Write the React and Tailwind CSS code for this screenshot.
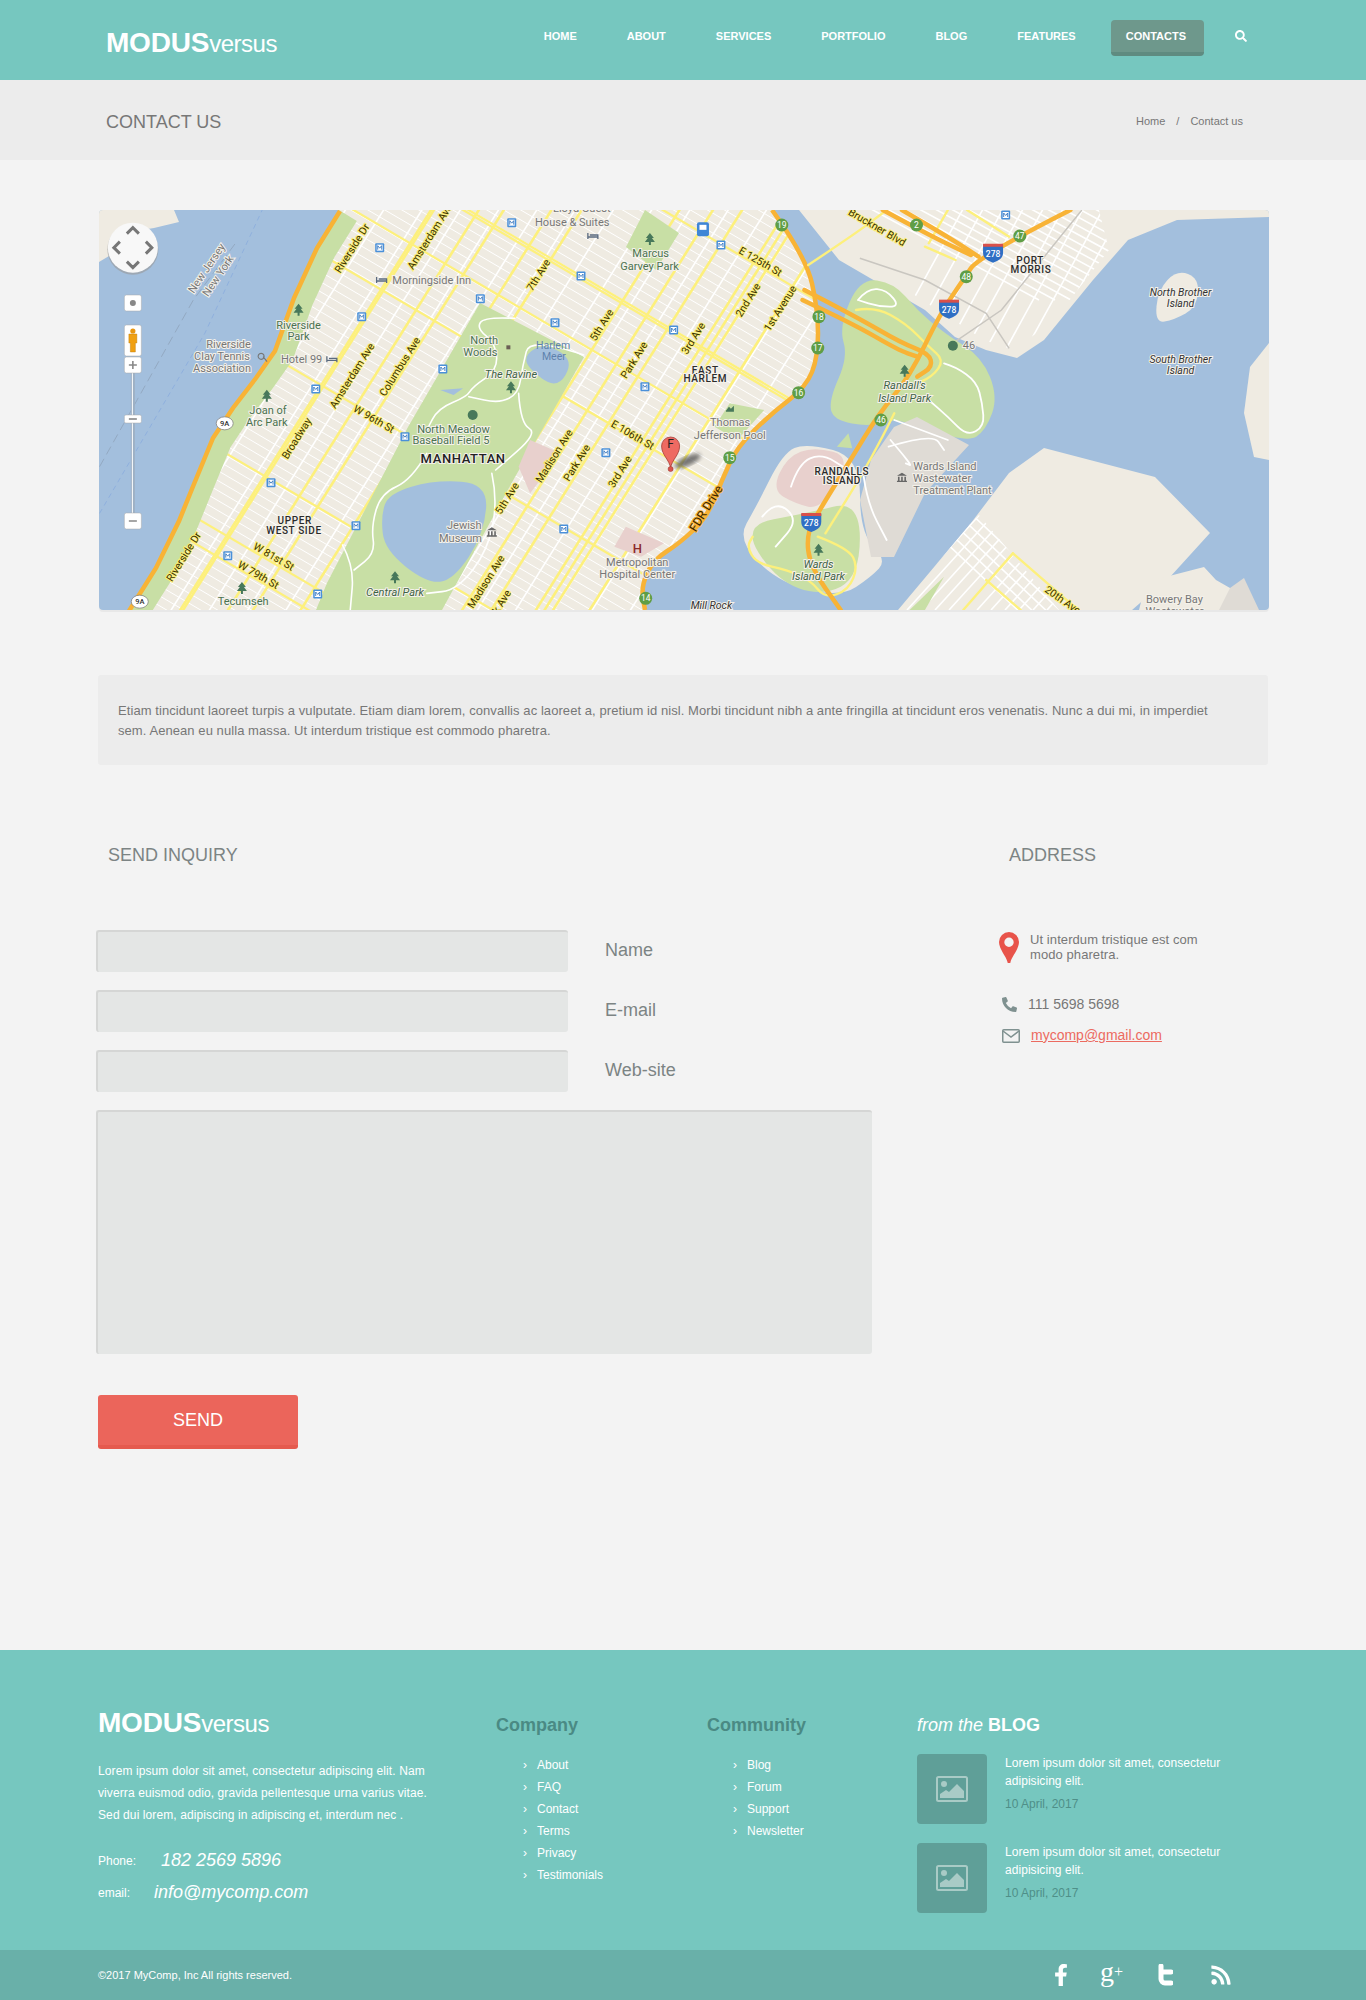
import { FaSearch, FaFacebookF, FaRss, FaPhoneAlt } from 'react-icons/fa';

const NAV = ['Home', 'About', 'Services', 'Portfolio', 'Blog', 'Features'];
const COMPANY = ['About', 'FAQ', 'Contact', 'Terms', 'Privacy', 'Testimonials'];
const COMMUNITY = ['Blog', 'Forum', 'Support', 'Newsletter'];

// map tracing helpers: west and east half of the map, in traced coordinates
const w = (x, y) => [x / 2.613 - 9, y / 3 - 10];
const e = (x, y) => [x / 2.613 + 581, y / 3 - 10];
const pts = (list) => list.map((p) => p.join(',')).join(' ');

// rounds a traced outline through the midpoints of its segments
const smooth = (list, closed = false) => {
  const mid = (a, b) => [(a[0] + b[0]) / 2, (a[1] + b[1]) / 2];
  if (closed) {
    let d = `M${mid(list[list.length - 1], list[0]).join(' ')}`;
    list.forEach((p, i) => {
      d += `Q${p.join(' ')} ${mid(p, list[(i + 1) % list.length]).join(' ')}`;
    });
    return `${d}Z`;
  }
  let d = `M${list[0].join(' ')}`;
  list.slice(1, -1).forEach((p, i) => {
    d += `Q${p.join(' ')} ${mid(p, list[i + 2]).join(' ')}`;
  });
  return `${d}L${list[list.length - 1].join(' ')}`;
};

const WATER = '#a3bfdd';
const LAND = '#efebe2';
const GREEN = '#c8dfa5';
const ORANGE = '#f8b336';
const YELLOW = '#fdf07c';

const HUDSON = [[240, 0], [217, 37], [194, 87], [175, 140], [156, 167], [133, 197], [113, 227], [94, 273], [79, 310], [56, 357], [29, 400]];
const EAST_SHORE = [[673, 0], [707, 47], [719, 100], [719, 147], [707, 177], [673, 203], [638, 237], [623, 270], [608, 307], [581, 333], [554, 350], [542, 377], [546, 400]];
const BRONX = [[700, 0], [740, 50], [826, 100], [856, 127], [887, 140], [918, 148], [945, 130], [967, 103], [994, 70], [1029, 30], [1078, 10], [1170, 7], [1170, 0]];
const QUEENS = [[945, 238], [1056, 267], [1111, 323], [1071, 367], [1033, 400], [799, 400], [872, 313], [910, 263]];
const PARK = [[381, 93], [309, 217], [228, 373], [217, 400], [343, 400], [416, 267], [485, 147]];
const RANDALL = [[761, 68], [795, 73], [818, 100], [845, 123], [883, 147], [899, 187], [887, 220], [868, 233], [795, 207], [772, 217], [734, 210], [730, 190], [749, 147], [740, 117]];
const PLANT = [[818, 207], [870, 235], [826, 283], [795, 347], [772, 347], [761, 290], [772, 250], [795, 217]];
const WARDS = [[707, 233], [761, 247], [761, 323], [788, 350], [772, 367], [742, 387], [680, 373], [638, 330], [657, 297], [684, 243]];

const AVE_DIR = [0.531, -0.847];
const ST_DIR = [0.862, 0.506];
const lineThrough = ([x, y], [dx, dy], len = 620) => [x - dx * len, y - dy * len, x + dx * len, y + dy * len];

const MAJOR_AVES = [w(700, 380), w(620, 540), w(650, 700), w(770, 600), w(900, 590), w(1110, 350), w(1300, 470), w(1240, 740), w(1300, 770), w(1400, 800), w(1510, 640), e(160, 330), e(250, 340)];
const MAJOR_STS = [w(700, 620), w(1430, 720), e(200, 195), w(480, 1090), w(430, 1135), w(1000, 240), w(1420, 330), w(400, 790), e(160, 510)];

const LABEL_STYLE = {
  grey: { fill: '#777', size: 11 },
  park: { fill: '#4b7350', size: 11 },
  parkI: { fill: '#3f6345', size: 11, italic: true },
  water: { fill: '#5f82ad', size: 10.5, halo: 'none' },
  road: { fill: '#3a3200', size: 10.5, halo: '#fdf07c' },
  fdr: { fill: '#3a2600', size: 12, halo: '#f8b336' },
  caps: { fill: '#2b2b2b', size: 10, weight: 500, spacing: 0.6 },
  city: { fill: '#222', size: 13, weight: 500, spacing: 0.6 },
  isle: { fill: '#333', size: 10.5, italic: true },
};

const LABELS = [
  [w(305, 205), 'New Jersey', 'grey', -56], [w(335, 228), 'New York', 'grey', -56],
  [w(685, 145), 'Riverside Dr', 'road', -58], [w(888, 110), 'Amsterdam Ave', 'road', -58],
  [w(893, 240), 'Morningside Inn', 'grey'], [w(1260, 66), 'House & Suites', 'grey'], [w(1285, 26), 'Lloyd Guest', 'grey'],
  [w(1172, 225), '7th Ave', 'road', -58], [w(1465, 160), 'Marcus', 'park'], [w(1462, 198), 'Garvey Park', 'park'],
  [w(545, 375), 'Riverside', 'park'], [w(545, 410), 'Park', 'park'],
  [w(362, 432), 'Riverside', 'grey'], [w(345, 468), 'Clay Tennis', 'grey'], [w(345, 504), 'Association', 'grey'],
  [w(553, 477), 'Hotel 99', 'grey'], [w(685, 527), 'Amsterdam Ave', 'road', -58], [w(810, 500), 'Columbus Ave', 'road', -58],
  [w(1030, 420), 'North', 'park'], [w(1020, 458), 'Woods', 'park'], [w(1210, 435), 'Harlem', 'water'], [w(1212, 468), 'Meer', 'water'],
  [w(1100, 522), 'The Ravine', 'parkI'], [w(1337, 375), '5th Ave', 'road', -58], [w(1422, 480), 'Park Ave', 'road', -58],
  [w(465, 632), 'Joan of', 'park'], [w(462, 668), 'Arc Park', 'park'],
  [w(540, 715), 'Broadway', 'road', -58], [w(742, 657), 'W 96th St', 'road', 30],
  [w(950, 687), 'North Meadow', 'park'], [w(943, 722), 'Baseball Field 5', 'park'], [w(975, 775), 'MANHATTAN', 'city'],
  [w(1418, 705), 'E 106th St', 'road', 30], [w(1213, 768), 'Madison Ave', 'road', -58], [w(1272, 788), 'Park Ave', 'road', -58],
  [w(1385, 815), '3rd Ave', 'road', -58], [w(1090, 895), '5th Ave', 'road', -58], [w(535, 960), 'UPPER', 'caps'], [w(533, 990), 'WEST SIDE', 'caps'],
  [w(978, 977), 'Jewish', 'grey'], [w(968, 1014), 'Museum', 'grey'], [w(480, 1070), 'W 81st St', 'road', 30], [w(440, 1125), 'W 79th St', 'road', 30],
  [w(245, 1070), 'Riverside Dr', 'road', -58], [w(797, 1176), 'Central Park', 'parkI'], [w(400, 1205), 'Tecumseh', 'park'],
  [w(1035, 1145), 'Madison Ave', 'road', -58], [w(1065, 1225), 'Park Ave', 'road', -58],
  [w(1430, 1086), 'Metropolitan', 'grey'], [w(1430, 1122), 'Hospital Center', 'grey'],
  [e(515, 82), 'Bruckner Blvd', 'road', 30], [e(210, 185), 'E 125th St', 'road', 30], [e(178, 300), '2nd Ave', 'road', -58],
  [e(262, 325), '1st Avenue', 'road', -58], [e(35, 415), '3rd Ave', 'road', -58], [e(915, 180), 'PORT', 'caps'], [e(917, 207), 'MORRIS', 'caps'],
  [e(1308, 276), 'North Brother', 'isle'], [e(1308, 309), 'Island', 'isle'], [e(1308, 477), 'South Brother', 'isle'], [e(1308, 510), 'Island', 'isle'],
  [e(755, 437), '46', 'grey'], [e(66, 510), 'EAST', 'caps'], [e(66, 534), 'HARLEM', 'caps'], [e(131, 668), 'Thomas', 'grey'], [e(130, 705), 'Jefferson Pool', 'grey'],
  [e(587, 555), "Randall's", 'parkI'], [e(587, 594), 'Island Park', 'parkI'], [e(423, 813), 'RANDALLS', 'caps'], [e(423, 840), 'ISLAND', 'caps'],
  [e(692, 798), 'Wards Island', 'grey'], [e(685, 834), 'Wastewater', 'grey'], [e(712, 870), 'Treatment Plant', 'grey'],
  [e(68, 925), 'FDR Drive', 'fdr', -58], [e(362, 1092), 'Wards', 'parkI'], [e(362, 1130), 'Island Park', 'parkI'], [e(82, 1217), 'Mill Rock', 'isle'],
  [e(1000, 1200), '20th Ave', 'road', 35], [e(1292, 1197), 'Bowery Bay', 'grey'], [e(1292, 1234), 'Wastewater', 'grey'],
];

const METRO = [w(1102, 68), w(757, 143), w(1283, 228), w(1020, 296), w(710, 350), w(1215, 368), w(1525, 390), w(922, 507), w(1450, 560), w(590, 567), w(823, 710), w(1348, 758), w(473, 848), w(695, 977), w(1238, 987), w(360, 1067), w(595, 1182), e(107, 135), e(851, 45)];
const TREES = [w(545, 332), w(462, 590), w(1100, 565), w(1463, 120), w(797, 1135), w(397, 1167), e(587, 515), e(362, 1052)];
const EXITS = [[e(266, 75), '19'], [e(618, 75), '2'], [e(888, 108), '47'], [e(748, 230), '48'], [e(363, 350), '18'], [e(360, 444), '17'], [e(310, 578), '16'], [e(525, 660), '46'], [e(130, 773), '15'], [w(1452, 1195), '14']];
const SHIELDS = [e(818, 158), e(703, 326), e(343, 966)];
const ROUTE_9A = [w(352, 670), w(130, 1205)];
const HOTELS = [w(762, 240), w(632, 478), w(1314, 108)];
const MUSEUMS = [w(1050, 997), e(580, 833)];

const PARK_PATHS = [
  [w(1110, 355), w(1030, 350), w(1010, 385), w(1060, 430), w(1065, 510), w(1000, 560), w(985, 590), w(910, 625), w(880, 690)],
  [w(1290, 465), w(1150, 410), w(1130, 500), w(1120, 580), w(1070, 610), w(990, 590)],
  [w(1120, 580), w(1125, 670), w(1170, 700), w(1060, 810)],
  [w(880, 760), w(840, 840), w(760, 880), w(735, 980), w(745, 1060), w(690, 1110)],
  [w(660, 1035), w(690, 1100), w(680, 1230)],
  [w(1050, 820), w(1065, 900), w(1040, 1050), w(960, 1170), w(880, 1180)],
];
const RANDALL_PATHS = [
  [e(690, 490), e(720, 500), e(775, 545), e(790, 610), e(795, 680), e(750, 708), e(700, 650), e(650, 600)],
  [e(465, 300), e(490, 265), e(540, 270), e(575, 320), e(520, 320), e(465, 300)],
  [e(560, 660), e(700, 720)],
  [e(545, 740), e(660, 700), e(690, 750)],
  [e(550, 720), e(610, 800), e(590, 790)],
  [e(480, 830), e(490, 910), e(540, 1020)],
  [e(290, 860), e(310, 790), e(370, 760), e(440, 810)],
  [e(215, 950), e(250, 900), e(310, 960), e(250, 1040)],
];
const ORANGE_RAMPS = [
  [e(325, 270), e(460, 350), e(580, 430), e(650, 460), e(660, 500), e(620, 530)],
  [e(320, 300), e(450, 370), e(570, 450), e(620, 470)],
  [e(530, 30), e(650, 105), e(760, 165)],
  [e(580, 30), e(700, 110), e(780, 170)],
  [e(1020, 30), e(780, 170), e(740, 240), e(680, 340), e(600, 530), e(520, 640), e(440, 790), e(370, 920), e(330, 1000), e(340, 1100), e(420, 1230)],
];
const YELLOW_RAMPS = [
  [e(460, 330), e(510, 320), e(590, 370), e(650, 440), e(690, 480), e(660, 530), e(600, 560)],
  [e(335, 195), e(460, 100), e(540, 30)],
  [e(640, 140), e(720, 180)],
  [e(700, 30), e(650, 130)],
  [e(750, 30), e(860, 110)],
  [e(360, 1010), e(440, 1045), e(465, 1100), e(440, 1170), e(380, 1195), e(340, 1140), e(280, 1110), e(200, 1090), e(175, 1040), e(190, 1010)],
  [e(560, 640), e(500, 780), e(380, 1000)],
  [e(740, 1230), e(870, 1060)],
  [e(870, 1060), e(1040, 1230)],
  [e(800, 1140), e(890, 1230)],
];

function MapLabel({ p, text, kind, rotate = 0 }) {
  const s = LABEL_STYLE[kind];
  return (
    <text
      x={p[0]}
      y={p[1]}
      transform={rotate ? `rotate(${rotate} ${p[0]} ${p[1]})` : undefined}
      textAnchor="middle"
      dominantBaseline="central"
      fontFamily="Roboto, sans-serif"
      fontSize={s.size}
      fontWeight={s.weight || 400}
      fontStyle={s.italic ? 'italic' : 'normal'}
      letterSpacing={s.spacing || 0}
      fill={s.fill}
      stroke={s.halo === 'none' ? 'none' : s.halo || '#f4f1ea'}
      strokeWidth="2"
      paintOrder="stroke"
    >
      {text}
    </text>
  );
}

function Lines({ list, stroke, width }) {
  return list.map((l, i) => (
    <path key={i} d={smooth(l)} fill="none" stroke={stroke} strokeWidth={width} strokeLinejoin="round" strokeLinecap="round" />
  ));
}

function MapControls() {
  const [cx, cy] = w(112, 143);
  const btn = 'white';
  return (
    <g>
      <circle cx={cx} cy={cy + 1.5} r="25.5" fill="#9a9a9a" opacity="0.6" />
      <circle cx={cx} cy={cy} r="25" fill="#f8f8f8" />
      <path d={`M${cx - 6} ${cy - 14}l6 -6 6 6M${cx - 6} ${cy + 14}l6 6 6 -6M${cx - 13} ${cy - 6}l-6 6 6 6M${cx + 13} ${cy - 6}l6 6 -6 6`} fill="none" stroke="#777" strokeWidth="3" />
      <rect x={cx - 8.5} y="85" width="17" height="16" rx="2" fill={btn} stroke="#aaa" strokeWidth="0.5" />
      <circle cx={cx} cy="93" r="3" fill="#888" />
      <rect x={cx - 2} y="163" width="4" height="145" fill="#9db0c4" />
      <rect x={cx - 1} y="163" width="1" height="145" fill="#fff" />
      <rect x={cx - 8.5} y="115" width="17" height="31" rx="2" fill={btn} stroke="#aaa" strokeWidth="0.5" />
      <circle cx={cx} cy="121" r="2.6" fill="#e8960f" />
      <path d={`M${cx - 4} 124h8v9h-1.5v9h-5v-9H${cx - 4}z`} fill="#f0a012" stroke="#b87708" strokeWidth="0.4" />
      <rect x={cx - 8.5} y="147" width="17" height="16" rx="2" fill={btn} stroke="#aaa" strokeWidth="0.5" />
      <path d={`M${cx - 4} 155h8M${cx} 151v8`} stroke="#888" strokeWidth="1.6" />
      <rect x={cx - 8.5} y="205" width="17" height="8" rx="1.5" fill={btn} stroke="#aaa" strokeWidth="0.5" />
      <path d={`M${cx - 4} 209h8`} stroke="#888" strokeWidth="1.6" />
      <rect x={cx - 8.5} y="303" width="17" height="16" rx="2" fill={btn} stroke="#aaa" strokeWidth="0.5" />
      <path d={`M${cx - 4} 311h8`} stroke="#888" strokeWidth="1.6" />
    </g>
  );
}

function MapPicture() {
  const [px, py] = [571.6, 234];
  return (
    <svg viewBox="0 0 1170 400" className="block h-[400px] w-[1170px]">
      <defs>
        <clipPath id="bronx-grid"><polygon points={pts([[770, 0], [1000, 0], [1010, 40], [955, 110], [915, 140], [885, 130], [800, 75]])} /></clipPath>
        <clipPath id="queens-grid"><polygon points={pts([[799, 400], [872, 313], [880, 305], [960, 400]])} /></clipPath>
        <filter id="pin-shadow"><feGaussianBlur stdDeviation="2" /></filter>
      </defs>
      <rect width="1170" height="400" fill={LAND} />

      {/* manhattan grid */}
      {Array.from({ length: 102 }, (_, i) => {
        const [a, b, c, d] = lineThrough([170 + AVE_DIR[0] * i * 8.6, 480 + AVE_DIR[1] * i * 8.6], ST_DIR, 800);
        return <line key={i} x1={a} y1={b} x2={c} y2={d} stroke="#fff" strokeWidth="1" />;
      })}
      {Array.from({ length: 24 }, (_, i) => {
        const [a, b, c, d] = lineThrough([20 + i * 28, 300 + i * 16.4], AVE_DIR, 700);
        return <line key={i} x1={a} y1={b} x2={c} y2={d} stroke="#fff" strokeWidth="1.6" />;
      })}
      {MAJOR_STS.map((p, i) => {
        const [a, b, c, d] = lineThrough(p, ST_DIR, 400);
        return <line key={i} x1={a} y1={b} x2={c} y2={d} stroke={YELLOW} strokeWidth="2.2" />;
      })}
      {MAJOR_AVES.map((p, i) => {
        const [a, b, c, d] = lineThrough(p, AVE_DIR);
        return <line key={i} x1={a} y1={b} x2={c} y2={d} stroke={YELLOW} strokeWidth="2.6" />;
      })}

      {/* parks, blocks */}
      <polygon points={pts(PARK)} fill={GREEN} />
      <polygon points={pts([[527, 37], [546, 0], [580, 23], [557, 60]])} fill={GREEN} />
      <polygon points={pts([w(1150, 720), w(1230, 760), w(1150, 880), w(1120, 800)])} fill="#e8d0cd" />
      <polygon points={pts([w(1400, 980), w(1500, 1030), w(1440, 1070), w(1370, 1040)])} fill="#e8d0cd" />
      <polyline points={pts(HUDSON)} fill="none" stroke={GREEN} strokeWidth="42" />
      <polygon points={pts([e(130, 610), e(220, 630), e(150, 720), e(90, 680)])} fill={GREEN} />

      {/* water */}
      <polygon points={pts([[0, 0], ...HUDSON, [0, 400]])} fill={WATER} />
      <path d={`${smooth(EAST_SHORE)}L1170 400L1170 0Z`} fill={WATER} />
      <path d={smooth([w(780, 880), w(900, 840), w(1040, 850), w(1030, 1000), w(950, 1140), w(880, 1150), w(770, 1050), w(760, 950)], true)} fill={WATER} />
      <path d={smooth([w(1140, 460), w(1190, 430), w(1265, 480), w(1220, 570), w(1140, 500)], true)} fill={WATER} />
      <polygon points={pts([w(915, 570), w(975, 565), w(950, 585)])} fill={WATER} />
      <path d={`M${pts([w(25, 800), w(270, 300), w(380, 130)])}`} fill="none" stroke="#93a9c2" strokeWidth="1" strokeDasharray="9 5" />
      <path d={`M${pts([w(25, 940), w(300, 400), w(450, 30)])}`} fill="none" stroke="#8fb0dd" strokeWidth="1" strokeDasharray="5 4" />

      {/* land around */}
      <polygon points={pts([[0, 0], [75, 0], [80, 12], [55, 18], [30, 22], [20, 40], [0, 52]])} fill={LAND} />
      <polygon points={pts(BRONX)} fill={LAND} />
      <g clipPath="url(#bronx-grid)">
        {Array.from({ length: 24 }, (_, i) => <line key={i} x1={700 + i * 16} y1={-40} x2={940 + i * 16} y2={90} stroke="#fff" strokeWidth="1.6" />)}
        {Array.from({ length: 22 }, (_, i) => <line key={i} x1={770 + i * 20} y1={170} x2={880 + i * 20} y2={-30} stroke="#fff" strokeWidth="1.6" />)}
      </g>
      <polyline points={pts([e(470, 175), e(640, 240), e(800, 340), e(860, 445)])} fill="none" stroke="#c9c6c0" strokeWidth="1.5" />
      <polyline points={pts([e(700, 440), e(840, 330), e(1050, 30)])} fill="none" stroke="#c9c6c0" strokeWidth="1.5" />
      <polygon points={pts(QUEENS)} fill={LAND} />
      <polygon points={pts([[1040, 400], [1047, 372], [1105, 357], [1117, 370], [1131, 378], [1155, 400]])} fill={LAND} />
      <polygon points={pts([[1131, 378], [1145, 368], [1160, 400], [1120, 400]])} fill="#dfdbd5" />
      <polygon points={pts([[1170, 133], [1151, 157], [1145, 203], [1155, 247], [1170, 250]])} fill={LAND} />
      <path d={smooth([[1056, 113], [1059, 80], [1078, 60], [1100, 68], [1098, 97], [1075, 110]], true)} fill={LAND} />
      <g clipPath="url(#queens-grid)">
        {Array.from({ length: 16 }, (_, i) => <line key={i} x1={780 + i * 14} y1={400} x2={880 + i * 14} y2={290} stroke="#fff" strokeWidth="1.6" />)}
        {Array.from({ length: 14 }, (_, i) => <line key={i} x1={780 + i * 14} y1={270} x2={940 + i * 14} y2={420} stroke="#fff" strokeWidth="1.6" />)}
      </g>
      <polygon points={pts([e(600, 1230), e(690, 1130), e(640, 1230)])} fill={GREEN} />

      {/* islands */}
      <path d={smooth(WARDS, true)} fill={LAND} />
      <path d={smooth([e(160, 975), e(330, 940), e(470, 900), e(470, 1130), e(370, 1190), e(250, 1140)], true)} fill={GREEN} />
      <path d={smooth([e(240, 870), e(280, 770), e(350, 740), e(450, 770), e(370, 930), e(300, 910)], true)} fill="#e8d0cd" />
      <path d={smooth(RANDALL, true)} fill={GREEN} />
      <polygon points={pts([e(410, 740), e(440, 700), e(450, 745)])} fill={GREEN} />
      <polygon points={pts(PLANT)} fill="#dfdbd5" />
      <Lines list={RANDALL_PATHS} stroke="#fff" width="1.8" />
      <Lines list={PARK_PATHS} stroke="#fff" width="1.6" />

      {/* highways */}
      <polyline points={pts(HUDSON.map(([x, y]) => [x + 1, y + 1]))} fill="none" stroke={ORANGE} strokeWidth="4.5" />
      <path d={smooth(EAST_SHORE)} fill="none" stroke={ORANGE} strokeWidth="4.5" />
      <Lines list={YELLOW_RAMPS} stroke={YELLOW} width="2.4" />
      <Lines list={ORANGE_RAMPS} stroke={ORANGE} width="4.5" />

      {/* markers */}
      {METRO.map(([x, y], i) => (
        <g key={i}>
          <rect x={x - 4.5} y={y - 4.5} width="9" height="9" rx="1" fill="#4a90d9" />
          <rect x={x - 3} y={y - 3} width="6" height="6" fill="#fff" />
          <path d={`M${x - 2} ${y + 2}v-4l2 2.5 2-2.5v4`} fill="none" stroke="#3a78bf" strokeWidth="0.9" />
        </g>
      ))}
      <rect x={e(60, 0)[0] - 6} y={e(0, 88)[1] - 7} width="12" height="14" rx="2" fill="#3f86d6" />
      <rect x={e(60, 0)[0] - 3.5} y={e(0, 88)[1] - 4.5} width="7" height="5" fill="#fff" />
      {TREES.map(([x, y], i) => <path key={i} d={`M${x} ${y - 7}l4 5h-2l3 4h-4v3h-2v-3h-4l3-4h-2z`} fill="#47785a" />)}
      {EXITS.map(([[x, y], n]) => (
        <g key={n + x}>
          <circle cx={x} cy={y} r="6.5" fill="#5f9e46" />
          <text x={x} y={y} textAnchor="middle" dominantBaseline="central" fontFamily="Roboto, sans-serif" fontSize="8.5" fill="#fff">{n}</text>
        </g>
      ))}
      {SHIELDS.map(([x, y], i) => (
        <g key={i}>
          <path d={`M${x - 10} ${y - 8}h20v8c0 6-5 8-10 10-5-2-10-4-10-10z`} fill="#2f6fc4" />
          <path d={`M${x - 10} ${y - 9}h20v3h-20z`} fill="#d9504a" />
          <text x={x} y={y + 1} textAnchor="middle" dominantBaseline="central" fontFamily="Roboto, sans-serif" fontSize="8.5" fontWeight="500" fill="#fff">278</text>
        </g>
      ))}
      {ROUTE_9A.map(([x, y], i) => (
        <g key={i}>
          <ellipse cx={x} cy={y} rx="8.5" ry="6.5" fill="#fff" stroke="#777" strokeWidth="0.7" />
          <text x={x} y={y} textAnchor="middle" dominantBaseline="central" fontFamily="Roboto, sans-serif" fontSize="7.5" fontWeight="500" fill="#333">9A</text>
        </g>
      ))}
      <text x={w(1430, 0)[0]} y={w(0, 1045)[1]} textAnchor="middle" dominantBaseline="central" fontFamily="Roboto, sans-serif" fontSize="13" fontWeight="500" fill="#8c2a2a">H</text>
      {HOTELS.map(([x, y], i) => <path key={i} d={`M${x - 5} ${y - 3}v6M${x - 5} ${y + 1}h10v2M${x - 3} ${y - 1}h8v2`} fill="none" stroke="#5b6b80" strokeWidth="1.3" />)}
      {MUSEUMS.map(([x, y], i) => <path key={i} d={`M${x} ${y - 5}l5 3h-10zM${x - 4} ${y - 1}h1.6v4h-1.6zM${x - 0.8} ${y - 1}h1.6v4h-1.6zM${x + 2.4} ${y - 1}h1.6v4h-1.6zM${x - 5} ${y + 3}h10v1.4h-10z`} fill="#666" />)}
      <path d={`M${w(447, 0)[0]} ${w(0, 460)[1]}a3 3 0 1 0 .1 0zM${w(447, 0)[0] + 2} ${w(0, 470)[1]}l4 5`} fill="none" stroke="#777" strokeWidth="1.1" />
      <rect x={w(1088, 0)[0]} y={w(0, 436)[1]} width="4" height="4" fill="#6b5f55" />
      <circle cx={w(1000, 0)[0]} cy={w(0, 645)[1]} r="5" fill="#47785a" />
      <circle cx={e(713, 0)[0]} cy={e(0, 437)[1]} r="5" fill="#47785a" />
      <path d={`M${e(120, 0)[0]} ${e(0, 632)[1]}l3-4 2 2 3-3v6h-8z`} fill="#47785a" />

      {LABELS.map(([p, text, kind, rotate]) => <MapLabel key={text + p[0]} p={p} text={text} kind={kind} rotate={rotate} />)}

      {/* marker pin */}
      <ellipse cx={px + 17} cy={py + 17} rx="14" ry="4.5" fill="#555" opacity="0.8" filter="url(#pin-shadow)" transform={`rotate(-25 ${px + 17} ${py + 17})`} />
      <path d={`M${px} ${py + 24}c-1-8-9-13-9-22a9 9 0 0 1 18 0c0 9-8 14-9 22z`} fill="#ee6a62" stroke="#a33c36" strokeWidth="0.8" />
      <circle cx={px} cy={py + 25} r="2.5" fill="#d9534c" stroke="#a33c36" strokeWidth="0.6" />
      <text x={px} y={py} textAnchor="middle" dominantBaseline="central" fontFamily="Roboto, sans-serif" fontSize="12" fill="#222">F</text>

      <MapControls />
    </svg>
  );
}

function Logo() {
  return (
    <div className="text-white leading-none">
      <span className="text-[28px] font-bold tracking-[-0.2px]">MODUS</span>
      <span className="text-[24px] tracking-[-0.5px]">versus</span>
    </div>
  );
}

function FormRow({ label }) {
  return (
    <div className="flex items-center">
      <input className="h-[42px] w-[472px] rounded-[3px] border-t-2 border-l-2 border-[#d5d6d5] bg-[#e4e6e5]" />
      <label className="ml-[37px] pb-[2px] text-[18px] text-[#7c8484]">{label}</label>
    </div>
  );
}

function LinkList({ items, indent }) {
  return (
    <ul className={`mt-[15px] text-[12px] leading-[22px] text-white ${indent}`}>
      {items.map((item) => (
        <li key={item} className="flex">
          <span className="w-[14px]">›</span>
          {item}
        </li>
      ))}
    </ul>
  );
}

function BlogItem() {
  return (
    <div className="flex gap-[18px]">
      <div className="flex h-[70px] w-[70px] shrink-0 items-center justify-center rounded-[4px] bg-[#5f9f98]">
        <svg viewBox="0 0 32 26" className="h-[26px] w-8">
          <rect x="1" y="1" width="30" height="24" rx="1.5" fill="none" stroke="#a9cbc6" strokeWidth="2" />
          <circle cx="8" cy="8" r="3" fill="#a9cbc6" />
          <path d="M4 22v-4l6-4 3 2 8-8 7 7v7z" fill="#a9cbc6" />
        </svg>
      </div>
      <div className="w-[230px]">
        <p className="text-[12px] leading-[18px] tracking-[0.05px] text-white">Lorem ipsum dolor sit amet, consectetur adipisicing elit.</p>
        <p className="mt-[5px] text-[12px] leading-[18px] text-[#4f8f88]">10 April, 2017</p>
      </div>
    </div>
  );
}

export default function App() {
  return (
    <div className="bg-[#f3f3f3] font-['Liberation_Sans',Arial,sans-serif]">
      <header className="h-20 bg-[#76c7bf]">
        <div className="mx-auto flex w-[1170px] items-start">
          <div className="pt-[29px] pl-2"><Logo /></div>
          <nav className="ml-auto flex items-start gap-5 pt-5 pr-[21px] text-[11px] font-bold text-white uppercase">
            {NAV.map((item) => (
              <a key={item} className="flex h-9 items-center border-b-4 border-transparent px-[15px]">{item}</a>
            ))}
            <a className="flex h-9 items-center rounded-[4px] border-b-4 border-[#5f8b80] bg-[#6e988c] pr-[18px] pl-[15px]">Contacts</a>
            <FaSearch className="mt-[10px] ml-[11px] text-[12px]" />
          </nav>
        </div>
      </header>

      <div className="h-20 bg-[#ececec]">
        <div className="mx-auto flex h-full w-[1170px] items-center justify-between pt-1 pr-[25px] pl-2 text-[#777]">
          <h1 className="text-[18px]">CONTACT US</h1>
          <div className="mb-[2px] flex gap-[11px] text-[11px]">
            <span>Home</span><span>/</span><span>Contact us</span>
          </div>
        </div>
      </div>

      <main className="mx-auto w-[1170px] pt-[50px] pb-[201px]">
        <div className="ml-px w-[1170px] overflow-hidden rounded-[4px] shadow-[0_2px_0_#e8e8e8]">
          <MapPicture />
        </div>

        <div className="mt-[65px] h-[90px] rounded-[3px] bg-[#ececec] pt-[26px] pr-[50px] pl-5 text-[13px] leading-5 tracking-[0.07px] text-[#777]">
          Etiam tincidunt laoreet turpis a vulputate. Etiam diam lorem, convallis ac laoreet a, pretium id nisl. Morbi tincidunt nibh a ante fringilla at tincidunt eros venenatis. Nunc a dui mi, in imperdiet sem. Aenean eu nulla massa. Ut interdum tristique est commodo pharetra.
        </div>

        <div className="mt-[78px] flex">
          <section className="w-[901px]">
            <h2 className="pl-[10px] text-[18px] leading-6 text-[#7c8484]">SEND INQUIRY</h2>
            <form className="mt-[63px] -ml-[2px] flex flex-col gap-[18px]">
              <FormRow label="Name" />
              <FormRow label="E-mail" />
              <FormRow label="Web-site" />
              <textarea className="h-[244px] w-[776px] resize-none rounded-[3px] border-t-2 border-l-2 border-[#d5d6d5] bg-[#e4e6e5]" />
            </form>
            <button className="mt-[41px] h-[54px] w-[200px] rounded-[3px] border-b-4 border-[#e55a4e] bg-[#eb655b] text-[18px] text-white">SEND</button>
          </section>

          <section className="flex-1 text-[#777]">
            <h2 className="pl-[10px] text-[18px] leading-6 text-[#7c8484]">ADDRESS</h2>
            <div className="mt-[65px] flex">
              <svg viewBox="0 0 20 31" className="h-[31px] w-5 shrink-0">
                <path fillRule="evenodd" d="M10 0a10 10 0 0 1 10 10c0 7-7 14-8.5 20a1.5 1.5 0 0 1-3 0C7 24 0 17 0 10A10 10 0 0 1 10 0zm0 5.5a4.7 4.7 0 1 0 0 9.4 4.7 4.7 0 0 0 0-9.4z" fill="#e8534a" />
              </svg>
              <p className="ml-[11px] w-[190px] text-[13px] leading-[15px] tracking-[0.08px]">Ut interdum tristique est com modo pharetra.</p>
            </div>
            <div className="mt-[31px] flex items-center pl-[3px]">
              <FaPhoneAlt className="text-[15px] text-[#7f9190]" />
              <span className="ml-[11px] text-[14px]">111 5698 5698</span>
            </div>
            <div className="mt-[10px] flex items-center pl-[3px]">
              <svg viewBox="0 0 18 14" className="h-[14px] w-[18px]">
                <rect x="0.75" y="0.75" width="16.5" height="12.5" rx="1" fill="none" stroke="#7f9190" strokeWidth="1.5" />
                <path d="M1 2l8 6 8-6" fill="none" stroke="#7f9190" strokeWidth="1.5" />
              </svg>
              <a className="ml-[11px] text-[14px] text-[#ec6a60] underline">mycomp@gmail.com</a>
            </div>
          </section>
        </div>
      </main>

      <footer className="bg-[#76c7bf] text-white">
        <div className="mx-auto flex h-[300px] w-[1170px] pt-[61px]">
          <div className="-mt-[2px] w-[398px]">
            <Logo />
            <p className="mt-[23px] w-[345px] text-[12px] leading-[22px] tracking-[0.1px]">
              Lorem ipsum dolor sit amet, consectetur adipiscing elit. Nam viverra euismod odio, gravida pellentesque urna varius vitae. Sed dui lorem, adipiscing in adipiscing et, interdum nec .
            </p>
            <div className="mt-[21px] flex items-center text-[12px]">
              <span className="w-[63px]">Phone:</span>
              <span className="text-[18px] italic">182 2569 5896</span>
            </div>
            <div className="mt-[5px] flex items-center text-[12px]">
              <span className="w-14">email:</span>
              <span className="text-[18px] italic">info@mycomp.com</span>
            </div>
          </div>
          <div className="w-[211px]">
            <h3 className="text-[18px] leading-7 font-bold text-[#4a8a84]">Company</h3>
            <LinkList items={COMPANY} indent="pl-[27px]" />
          </div>
          <div className="w-[210px]">
            <h3 className="text-[18px] leading-7 font-bold text-[#4a8a84]">Community</h3>
            <LinkList items={COMMUNITY} indent="pl-[26px]" />
          </div>
          <div>
            <h3 className="text-[18px] leading-7"><em>from the</em> <b>BLOG</b></h3>
            <div className="mt-[15px] flex flex-col gap-[19px]">
              <BlogItem />
              <BlogItem />
            </div>
          </div>
        </div>
        <div className="h-[50px] bg-[#69b0a9]">
          <div className="mx-auto flex h-full w-[1170px] items-center justify-between pr-[36px] text-[11px]">
            <span>©2017 MyComp, Inc All rights reserved.</span>
            <div className="flex items-center">
              <FaFacebookF className="text-[22px]" />
              <span className="ml-[28px] -translate-y-[3px] font-['Liberation_Serif',serif] text-[28px] leading-none">g<span className="align-[4px] text-[16px]">+</span></span>
              <svg viewBox="0 0 16 22" className="ml-[34px] h-[22px] w-4">
                <path d="M4 2v13a4 4 0 0 0 4 4h6M4 8h10" fill="none" stroke="#fff" strokeWidth="5" strokeLinecap="round" />
              </svg>
              <FaRss className="ml-[37px] text-[22px]" />
            </div>
          </div>
        </div>
      </footer>
    </div>
  );
}
